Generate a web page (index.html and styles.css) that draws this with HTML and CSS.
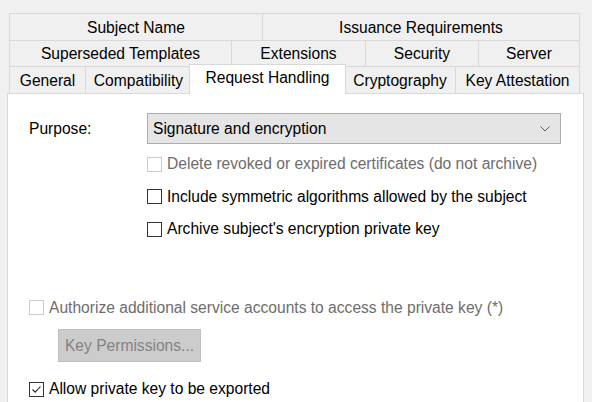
FILE: index.html
```html
<!DOCTYPE html>
<html>
<head>
<meta charset="utf-8">
<link rel="stylesheet" href="styles.css">
</head>
<body>
<div class="dialog">
  <div class="tabs">
    <div class="row r1">
      <div class="tab t-subject">Subject Name</div>
      <div class="tab t-issuance last">Issuance Requirements</div>
    </div>
    <div class="row r2">
      <div class="tab t-superseded">Superseded Templates</div>
      <div class="tab t-extensions">Extensions</div>
      <div class="tab t-security">Security</div>
      <div class="tab t-server last">Server</div>
    </div>
    <div class="row r3">
      <div class="tab t-general">General</div>
      <div class="tab t-compat">Compatibility</div>
      <div class="tab t-request sel">Request Handling</div>
      <div class="tab t-crypto">Cryptography</div>
      <div class="tab t-attest last">Key Attestation</div>
    </div>
  </div>
  <div class="panel">
    <div class="purpose">
      <span class="label">Purpose:</span>
      <div class="combo">
        <span>Signature and encryption</span>
        <svg class="chev" width="10" height="6" viewBox="0 0 10 6"><polyline points="0.5,0.5 5,5 9.5,0.5" fill="none" stroke="#606060" stroke-width="1"/></svg>
      </div>
    </div>
    <div class="checks">
      <label class="check disabled"><span class="box"></span><span>Delete revoked or expired certificates (do not archive)</span></label>
      <label class="check"><span class="box"></span><span>Include symmetric algorithms allowed by the subject</span></label>
      <label class="check"><span class="box"></span><span>Archive subject's encryption private key</span></label>
    </div>
    <div class="lower">
      <label class="check disabled"><span class="box"></span><span>Authorize additional service accounts to access the private key (*)</span></label>
      <div class="btn">Key Permissions...</div>
      <label class="check allow"><span class="box"><svg width="13" height="13" viewBox="0 0 13 13"><polyline points="2.5,6.5 5.2,9.2 10.5,3.5" fill="none" stroke="#202020" stroke-width="1.1"/></svg></span><span>Allow private key to be exported</span></label>
    </div>
  </div>
</div>
</body>
</html>
```

FILE: styles.css
```css
* { box-sizing: border-box; }
html, body { margin: 0; padding: 0; }
body {
  background: #f0f0f0;
  font-family: "Liberation Sans", Arial, sans-serif;
  font-size: 15.6px;
  color: #000;
  overflow: hidden;
  width: 592px;
  height: 402px;
}
.dialog { padding: 13px 0 0 7px; }
.tabs { margin-left: 2px; width: 571px; }
.row { display: flex; }
.r1 { height: 27px; }
.r2 { height: 26px; }
.r3 { height: 27px; }
.tab {
  border-left: 1px solid #d9d9d9;
  border-top: 1px solid #d9d9d9;
  background: #f0f0f0;
  display: flex;
  align-items: center;
  justify-content: center;
  white-space: nowrap;
  padding-top: 1px;
}
.tab.last { border-right: 1px solid #d9d9d9; }
.t-subject { width: 253px; }
.t-issuance { width: 318px; }
.t-superseded { width: 222px; }
.t-extensions { width: 134px; }
.t-security { width: 113px; }
.t-server { width: 102px; }
.t-general { width: 76px; }
.t-compat { width: 106px; }
.t-request { width: 153px; }
.t-crypto { width: 111px; }
.t-attest { width: 125px; }
.tab.sel {
  position: relative;
  z-index: 1;
  width: 157px;
  height: 30px;
  margin: -2px -2px -1px -2px;
  background: #fff;
  border: 1px solid #d9d9d9;
  border-bottom: none;
  padding-top: 0;
  padding-bottom: 3px;
}
.panel {
  width: 577px;
  height: 309px;
  background: #fff;
  border: 1px solid #d9d9d9;
  border-bottom: none;
  padding: 19px 0 0 21px;
}
.purpose { display: flex; align-items: center; }
.label { width: 118px; }
.combo {
  width: 414px;
  height: 31px;
  background: #e5e5e5;
  border: 1px solid #adadad;
  display: flex;
  align-items: center;
  justify-content: space-between;
  padding: 0 10px 0 5px;
}
.chev { margin-top: 1px; }
.checks { margin: 4px 0 0 118px; }
.check {
  display: flex;
  align-items: center;
  height: 32.5px;
  white-space: nowrap;
}
.box {
  width: 15px;
  height: 15px;
  border: 1px solid #333;
  background: #fff;
  margin-right: 5px;
  flex: none;
  display: flex;
  align-items: center;
  justify-content: center;
}
.check.disabled { color: #6d6d6d; }
.check.disabled .box { border-color: #cccccc; }
.lower { margin-top: 46px; }
.btn {
  margin: 5px 0 0 29px;
  width: 143px;
  height: 33px;
  background: #cccccc;
  border: 1px solid #bfbfbf;
  color: #838383;
  display: flex;
  align-items: center;
  justify-content: center;
}
.allow { margin-top: 11px; }
```
